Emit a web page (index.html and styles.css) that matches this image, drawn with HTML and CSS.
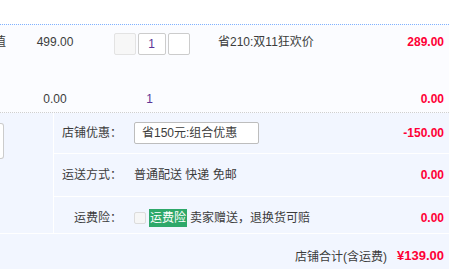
FILE: index.html
```
<!DOCTYPE html>
<html lang="zh-CN">
<head>
    <meta charset="UTF-8">
    <title>确认订单</title>
    <link rel="stylesheet" href="styles.css">
</head>
<body>
    <div class="order">
        <div class="items">
            <div class="row item-row">
                <div class="cell name"><span>宝贝价值</span></div>
                <div class="cell price">499.00</div>
                <div class="cell qty">
                    <span class="btn minus"></span>
                    <span class="num">1</span>
                    <span class="btn plus"></span>
                </div>
                <div class="cell promo">省210:双11狂欢价</div>
                <div class="cell sum">289.00</div>
            </div>
            <div class="row sub-row">
                <div class="cell name"></div>
                <div class="cell price">0.00</div>
                <div class="cell qty"><span class="count">1</span></div>
                <div class="cell promo"></div>
                <div class="cell sum">0.00</div>
            </div>
        </div>

        <div class="shop">
            <div class="memo">
                <div class="memo-box"></div>
            </div>
            <div class="opts">
                <div class="opt opt-coupon">
                    <div class="label">店铺优惠：</div>
                    <div class="content">
                        <div class="select">省150元:组合优惠</div>
                    </div>
                    <div class="amount">-150.00</div>
                </div>
                <div class="opt opt-ship">
                    <div class="label">运送方式：</div>
                    <div class="content">普通配送 快递 免邮</div>
                    <div class="amount">0.00</div>
                </div>
                <div class="opt opt-ins">
                    <div class="label">运费险：</div>
                    <div class="content">
                        <span class="check"></span>
                        <span class="tag">运费险</span>
                        <span>卖家赠送，退换货可赔</span>
                    </div>
                    <div class="amount">0.00</div>
                </div>
            </div>
        </div>

        <div class="total">
            <span class="total-label">店铺合计(含运费)</span>
            <span class="total-price">¥139.00</span>
        </div>
    </div>
</body>
</html>
```

FILE: styles.css
```
* {
    margin: 0;
    padding: 0;
    box-sizing: border-box;
}

body {
    font-family: "Liberation Sans", "Noto Sans CJK SC", sans-serif;
    font-size: 12px;
    color: #3c3c3c;
    background: #fff;
}

.order {
    width: 449px;
    padding-top: 24px;
}

.items {
    background: #fbfcff;
    border-top: 1px dotted #80b2ff;
    border-bottom: 1px dotted #cfcfcf;
}

.row {
    display: flex;
    align-items: flex-start;
    line-height: 18px;
}

.item-row {
    height: 65px;
    padding-top: 8px;
}

.sub-row {
    height: 22px;
}

.cell {
    white-space: nowrap;
}

.name {
    width: 6px;
    overflow: hidden;
    display: flex;
    justify-content: flex-end;
}

.price {
    width: 98px;
    text-align: center;
}

.qty {
    width: 95px;
    display: flex;
    justify-content: center;
    gap: 2px;
}

.btn,
.num {
    display: block;
    height: 22px;
    border: 1px solid #ccc;
    border-radius: 2px;
    background: #fff;
}

.btn {
    width: 22px;
}

.minus {
    border-color: #e3e3e3;
    background: #f7f7f7;
}

.num {
    width: 28px;
    line-height: 20px;
    text-align: center;
    color: #5c3596;
}

.count {
    color: #5c3596;
    margin-right: 4px;
}

.promo {
    flex: 1;
    padding-left: 19px;
}

.sum {
    padding-right: 5px;
    text-align: right;
    color: #ff0036;
    font-weight: bold;
}

.shop {
    display: flex;
    background: #f2f6ff;
    border-bottom: 1px solid #fff;
}

.memo {
    width: 53px;
    padding-top: 10px;
}

.memo-box {
    width: 4px;
    height: 36px;
    background: #fff;
    border: 1px solid #ccc;
    border-left: none;
    border-radius: 0 3px 3px 0;
}

.opts {
    flex: 1;
    border-left: 1px solid #fff;
}

.opt {
    display: flex;
    align-items: center;
    line-height: 18px;
}

.opt-coupon {
    height: 41px;
    border-bottom: 1px solid #fff;
}

.opt-ship {
    height: 43px;
    border-bottom: 1px solid #fff;
}

.opt-ins {
    height: 36px;
    padding-top: 6px;
}

.label {
    width: 60px;
    margin-left: 8px;
    text-align: right;
}

.content {
    flex: 1;
    padding-left: 12px;
    display: flex;
    align-items: center;
    white-space: nowrap;
}

.select {
    width: 125px;
    height: 22px;
    line-height: 20px;
    padding-left: 7px;
    background: #fff;
    border: 1px solid #bdbdbd;
    border-radius: 2px;
}

.check {
    width: 12px;
    height: 12px;
    border: 1px solid #dcdcdc;
    border-radius: 2px;
    background: #f6f6f6;
    margin-right: 3px;
}

.tag {
    background: #2ea86a;
    color: #fff;
    padding: 0 1px;
    margin-right: 3px;
}

.amount {
    padding-right: 5px;
    color: #ff0036;
    font-weight: bold;
}

.total {
    display: flex;
    justify-content: flex-end;
    align-items: center;
    height: 42px;
    padding-right: 5px;
    background: #f2f6ff;
}

.total-label {
    font-size: 12px;
    margin-right: 10px;
}

.total-price {
    font-size: 13px;
    font-weight: bold;
    color: #ff0036;
}
```
